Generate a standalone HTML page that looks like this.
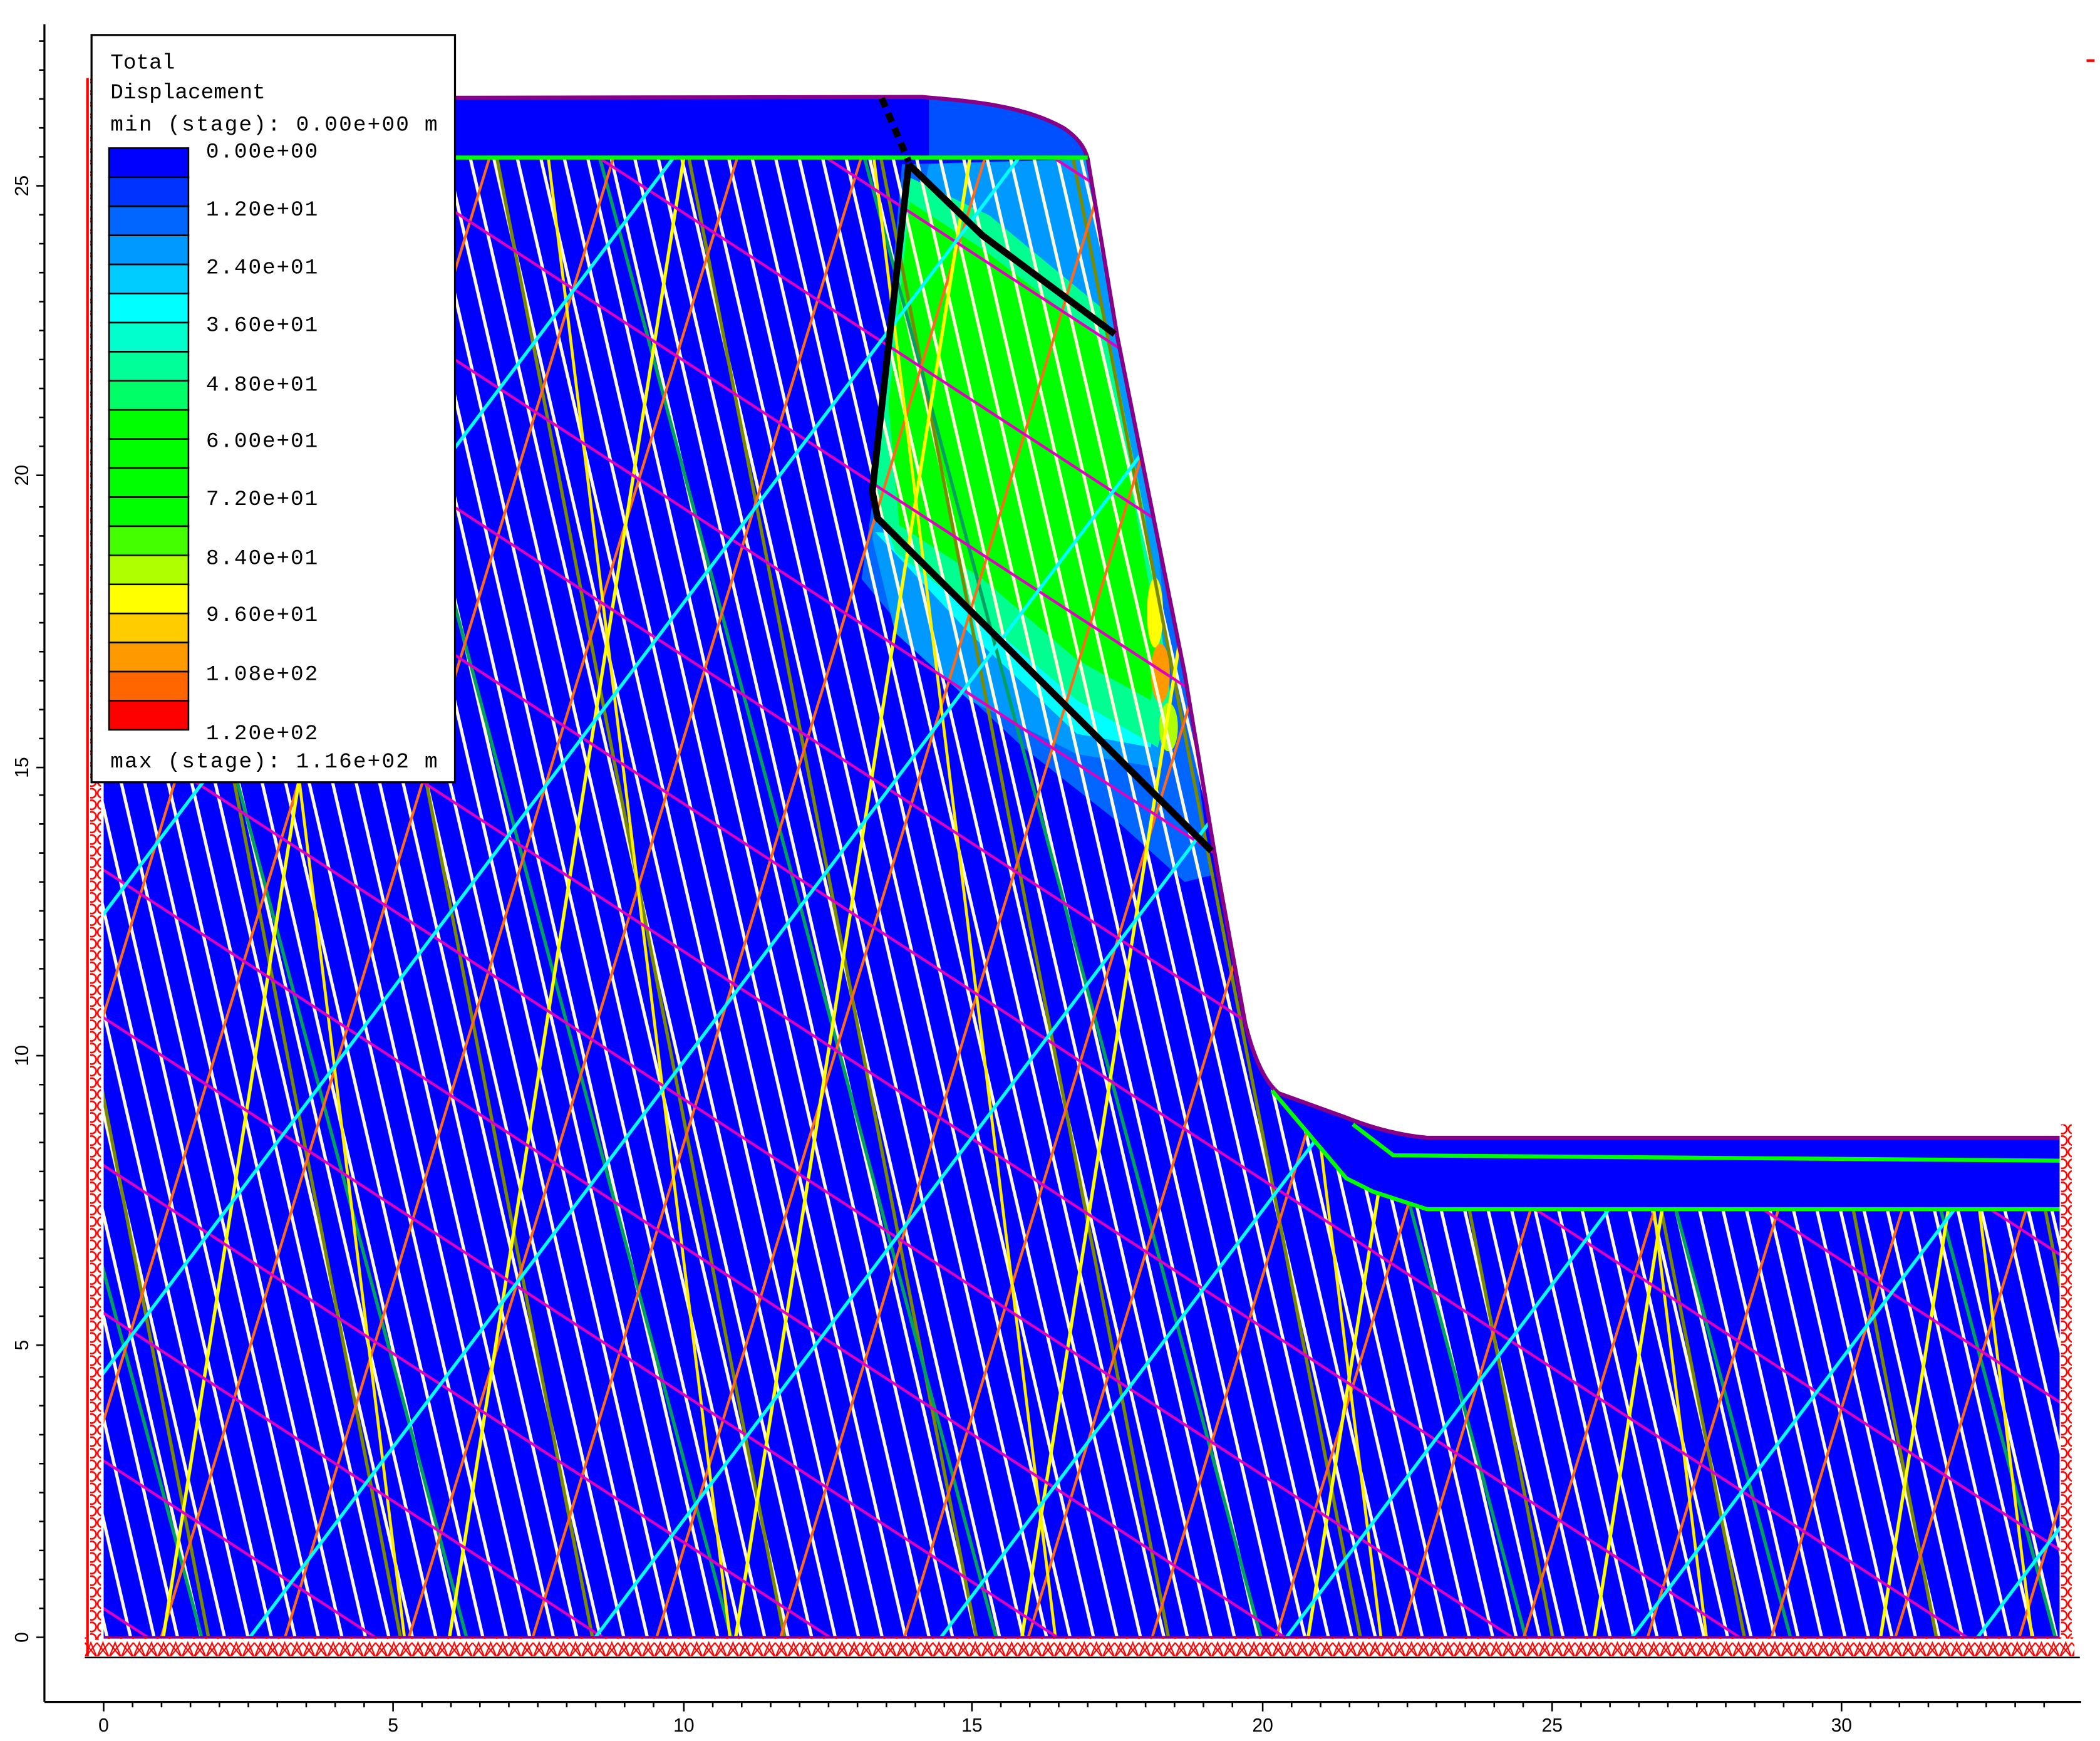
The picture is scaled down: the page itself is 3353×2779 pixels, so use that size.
<!DOCTYPE html>
<html><head><meta charset="utf-8"><style>html,body{margin:0;padding:0;background:#fff}svg{display:block}</style></head>
<body>
<svg width="3353" height="2779" viewBox="0 0 1560 1293" preserveAspectRatio="none" xmlns="http://www.w3.org/2000/svg">
<defs>
<clipPath id="jc"><path d="M77,117 L808,117 L830,250 L880,500 L905,650 L925,760 Q935,800 945,810 L1000,875 L1020,885 L1060,898 L1530,898 L1530,1216 L77,1216 Z"/></clipPath>
<pattern id="pw" width="17" height="100" patternUnits="userSpaceOnUse" patternTransform="rotate(-13)"><line x1="8" y1="0" x2="8" y2="100" stroke="#fffbd8" stroke-width="2.4"/></pattern>
<pattern id="po" width="88" height="100" patternUnits="userSpaceOnUse" patternTransform="rotate(17)"><line x1="30" y1="0" x2="30" y2="100" stroke="#ff6a1a" stroke-width="2"/></pattern>
<pattern id="pol" width="140" height="100" patternUnits="userSpaceOnUse" patternTransform="rotate(-11)"><line x1="60" y1="0" x2="60" y2="100" stroke="#7a8a00" stroke-width="2.5"/></pattern>
<pattern id="pg" width="190" height="100" patternUnits="userSpaceOnUse" patternTransform="rotate(-15)"><line x1="20" y1="0" x2="20" y2="100" stroke="#00a060" stroke-width="2.5"/></pattern>
<pattern id="py1" width="210" height="100" patternUnits="userSpaceOnUse" patternTransform="rotate(9)"><line x1="100" y1="0" x2="100" y2="100" stroke="#ffff00" stroke-width="2.5"/></pattern>
<pattern id="py2" width="240" height="100" patternUnits="userSpaceOnUse" patternTransform="rotate(-7)"><line x1="150" y1="0" x2="150" y2="100" stroke="#ffef00" stroke-width="2.2"/></pattern>
<pattern id="pm" width="100" height="92" patternUnits="userSpaceOnUse" patternTransform="rotate(33)"><line x1="0" y1="40" x2="100" y2="40" stroke="#e000c0" stroke-width="2"/></pattern>
<pattern id="pc" width="100" height="205" patternUnits="userSpaceOnUse" patternTransform="rotate(-53)"><line x1="0" y1="60" x2="100" y2="60" stroke="#00ffff" stroke-width="2.5"/></pattern>
<pattern id="rc" width="8" height="8.6" patternUnits="userSpaceOnUse"><circle cx="4" cy="4.3" r="3.4" fill="none" stroke="#ff0000" stroke-width="1.2"/></pattern>
<pattern id="rb" width="9" height="14" patternUnits="userSpaceOnUse"><path d="M0,13 L4.5,2 L9,13 M0,2 L9,13 M9,2 L0,13" fill="none" stroke="#ff0000" stroke-width="1"/></pattern>
</defs>

<line x1="33" y1="18" x2="33" y2="1264" stroke="#000" stroke-width="1.5"/>
<line x1="33" y1="1264" x2="1546" y2="1264" stroke="#000" stroke-width="1.5"/>
<g stroke="#000" stroke-width="1.2">
<path d="M27,1216h6M29,1194.5h4M29,1173h4M29,1151.5h4M29,1130h4M29,1108.5h4M29,1087h4M29,1065.5h4M29,1044h4M29,1022.5h4M27,999h6M29,977.5h4M29,956h4M29,934.5h4M29,913h4M29,891.5h4M29,870h4M29,848.5h4M29,827h4M29,805.5h4M27,784h6M29,762.5h4M29,741h4M29,719.5h4M29,698h4M29,676.5h4M29,655h4M29,633.5h4M29,612h4M29,590.5h4M27,570h6M29,548.5h4M29,527h4M29,505.5h4M29,484h4M29,462.5h4M29,441h4M29,419.5h4M29,398h4M29,376.5h4M27,353h6M29,331.5h4M29,310h4M29,288.5h4M29,267h4M29,245.5h4M29,224h4M29,202.5h4M29,181h4M29,159.5h4M27,138h6M29,116.5h4M29,95h4M29,73.5h4M29,52h4M29,30.5h4"/>
<path d="M77,1264v7M98.5,1264v4M120,1264v4M141.5,1264v4M163,1264v4M184.5,1264v4M206,1264v4M227.5,1264v4M249,1264v4M270.5,1264v4M292,1264v7M313.5,1264v4M335,1264v4M356.5,1264v4M378,1264v4M399.5,1264v4M421,1264v4M442.5,1264v4M464,1264v4M485.5,1264v4M508,1264v7M529.5,1264v4M551,1264v4M572.5,1264v4M594,1264v4M615.5,1264v4M637,1264v4M658.5,1264v4M680,1264v4M701.5,1264v4M722,1264v7M743.5,1264v4M765,1264v4M786.5,1264v4M808,1264v4M829.5,1264v4M851,1264v4M872.5,1264v4M894,1264v4M915.5,1264v4M938,1264v7M959.5,1264v4M981,1264v4M1002.5,1264v4M1024,1264v4M1045.5,1264v4M1067,1264v4M1088.5,1264v4M1110,1264v4M1131.5,1264v4M1153,1264v7M1174.5,1264v4M1196,1264v4M1217.5,1264v4M1239,1264v4M1260.5,1264v4M1282,1264v4M1303.5,1264v4M1325,1264v4M1346.5,1264v4M1368,1264v7M1389.5,1264v4M1411,1264v4M1432.5,1264v4M1454,1264v4M1475.5,1264v4M1497,1264v4M1518.5,1264v4"/>
</g>
<g font-family="Liberation Sans, sans-serif" font-size="14" fill="#000" text-anchor="middle">
<text x="77" y="1286">0</text><text x="292" y="1286">5</text><text x="508" y="1286">10</text><text x="722" y="1286">15</text><text x="938" y="1286">20</text><text x="1153" y="1286">25</text><text x="1368" y="1286">30</text>
<text transform="translate(21,1216) rotate(-90)">0</text><text transform="translate(21,999) rotate(-90)">5</text><text transform="translate(21,784) rotate(-90)">10</text><text transform="translate(21,570) rotate(-90)">15</text><text transform="translate(21,353) rotate(-90)">20</text><text transform="translate(21,138) rotate(-90)">25</text>
</g>

<path d="M77,73 L685,72 C720,75 760,78 790,95 Q805,105 808,118 L830,250 L880,500 L905,650 L925,760 Q935,800 950,812 L1000,830 Q1030,842 1060,845 L1530,845 L1530,1216 L77,1216 Z" fill="#0000ff"/>
<path d="M690,73 C730,76 765,82 790,95 Q805,105 808,118 L690,118 Z" fill="#0050ff"/>
<path d="M670,122 L808,118 L830,250 L880,500 L900,650 L880,655 L830,610 L760,555 L690,490 L640,430 L650,360 Z" fill="#0066ff"/>
<path d="M690,122 L808,118 L830,250 L860,400 L870,520 L860,570 L800,560 L720,520 L665,470 L648,400 L660,280 Z" fill="#0099ff"/>
<path d="M650,395 L720,470 L800,545 L855,555 L860,470 L790,420 L700,400 Z" fill="#00ffff"/>
<path d="M672,130 L735,160 L820,230 L850,380 L870,520 L860,555 L800,520 L730,460 L665,410 L650,365 Z" fill="#00ff90"/>
<path d="M676,150 L730,185 L815,250 L840,360 L860,470 L855,520 L800,490 L730,430 L668,390 L660,300 Z" fill="#00ff00"/>
<ellipse cx="858" cy="455" rx="6" ry="26" fill="#ffff00"/>
<ellipse cx="862" cy="500" rx="7" ry="22" fill="#ff9900"/>
<ellipse cx="868" cy="540" rx="7" ry="18" fill="#b0ff00"/>
<g clip-path="url(#jc)">
<rect x="60" y="100" width="1480" height="1130" fill="url(#pw)"/>
<rect x="60" y="100" width="1480" height="1130" fill="url(#pol)"/>
<rect x="60" y="100" width="1480" height="1130" fill="url(#pg)"/>
<rect x="60" y="100" width="1480" height="1130" fill="url(#po)"/>
<rect x="60" y="100" width="1480" height="1130" fill="url(#py1)"/>
<rect x="60" y="100" width="1480" height="1130" fill="url(#py2)"/>
<rect x="60" y="100" width="1480" height="1130" fill="url(#pm)"/>
<rect x="60" y="100" width="1480" height="1130" fill="url(#pc)"/>
</g>
<path d="M77,73 L685,72 C720,75 760,78 790,95 Q805,105 808,118 L830,250 L880,500 L905,650 L925,760 Q935,800 950,812 L1000,830 Q1030,842 1060,845 L1530,845" fill="none" stroke="#880088" stroke-width="3"/>
<line x1="77" y1="117" x2="808" y2="117" stroke="#00ff00" stroke-width="3"/>
<path d="M945,810 L1000,875 L1020,885 L1060,898 L1530,898" fill="none" stroke="#00ff00" stroke-width="3"/>
<path d="M1005,835 L1035,858 L1530,862" fill="none" stroke="#00ff00" stroke-width="3"/>
<line x1="77" y1="1216" x2="1530" y2="1216" stroke="#880088" stroke-width="2"/>
<path d="M655,73 L675,120" stroke="#000" stroke-width="5" stroke-dasharray="7,5" fill="none"/>
<path d="M675,122 L648,365 L652,385 L900,632" stroke="#000" stroke-width="5" fill="none" stroke-linejoin="round"/>
<path d="M675,122 L730,175 L828,248" stroke="#000" stroke-width="5" fill="none"/>
<line x1="65" y1="58" x2="65" y2="1230" stroke="#ff0000" stroke-width="2"/>
<rect x="67" y="58" width="8" height="1160" fill="url(#rc)"/>
<rect x="1531" y="835" width="8" height="382" fill="url(#rc)"/>
<rect x="63" y="1216" width="1478" height="14" fill="url(#rb)"/>
<line x1="63" y1="1231" x2="1545" y2="1231" stroke="#000" stroke-width="1.2"/>
<line x1="1550" y1="45" x2="1556" y2="45" stroke="#ff0000" stroke-width="2"/>

<rect x="68" y="26" width="270" height="555" fill="#fff" stroke="#000" stroke-width="1.5"/>
<g stroke="#000" stroke-width="1.2">
<rect x="81" y="110" width="59" height="21.6" fill="#0000ff"/>
<rect x="81" y="131.6" width="59" height="21.6" fill="#0033ff"/>
<rect x="81" y="153.2" width="59" height="21.6" fill="#0066ff"/>
<rect x="81" y="174.8" width="59" height="21.6" fill="#0099ff"/>
<rect x="81" y="196.4" width="59" height="21.6" fill="#00ccff"/>
<rect x="81" y="218" width="59" height="21.6" fill="#00ffff"/>
<rect x="81" y="239.6" width="59" height="21.6" fill="#00ffcc"/>
<rect x="81" y="261.2" width="59" height="21.6" fill="#00ff99"/>
<rect x="81" y="282.8" width="59" height="21.6" fill="#00ff66"/>
<rect x="81" y="304.4" width="59" height="21.6" fill="#00ff00"/>
<rect x="81" y="326" width="59" height="21.6" fill="#00ff00"/>
<rect x="81" y="347.6" width="59" height="21.6" fill="#00ff00"/>
<rect x="81" y="369.2" width="59" height="21.6" fill="#00ff00"/>
<rect x="81" y="390.8" width="59" height="21.6" fill="#44ff00"/>
<rect x="81" y="412.4" width="59" height="21.6" fill="#b0ff00"/>
<rect x="81" y="434" width="59" height="21.6" fill="#ffff00"/>
<rect x="81" y="455.6" width="59" height="21.6" fill="#ffcc00"/>
<rect x="81" y="477.2" width="59" height="21.6" fill="#ff9900"/>
<rect x="81" y="498.8" width="59" height="21.6" fill="#ff6600"/>
<rect x="81" y="520.4" width="59" height="21.6" fill="#ff0000"/>
</g>
<g font-family="Liberation Mono, monospace" font-size="16" fill="#000">
<text x="82" y="51">Total</text>
<text x="82" y="73">Displacement</text>
<text x="82" y="97" textLength="243">min (stage): 0.00e+00 m</text>
<text x="153" y="117" textLength="83">0.00e+00</text>
<text x="153" y="160" textLength="83">1.20e+01</text>
<text x="153" y="203" textLength="83">2.40e+01</text>
<text x="153" y="246" textLength="83">3.60e+01</text>
<text x="153" y="290" textLength="83">4.80e+01</text>
<text x="153" y="332" textLength="83">6.00e+01</text>
<text x="153" y="375" textLength="83">7.20e+01</text>
<text x="153" y="419" textLength="83">8.40e+01</text>
<text x="153" y="461" textLength="83">9.60e+01</text>
<text x="153" y="505" textLength="83">1.08e+02</text>
<text x="153" y="549" textLength="83">1.20e+02</text>
<text x="82" y="570" textLength="243">max (stage): 1.16e+02 m</text>
</g>
</svg>
</body></html>
